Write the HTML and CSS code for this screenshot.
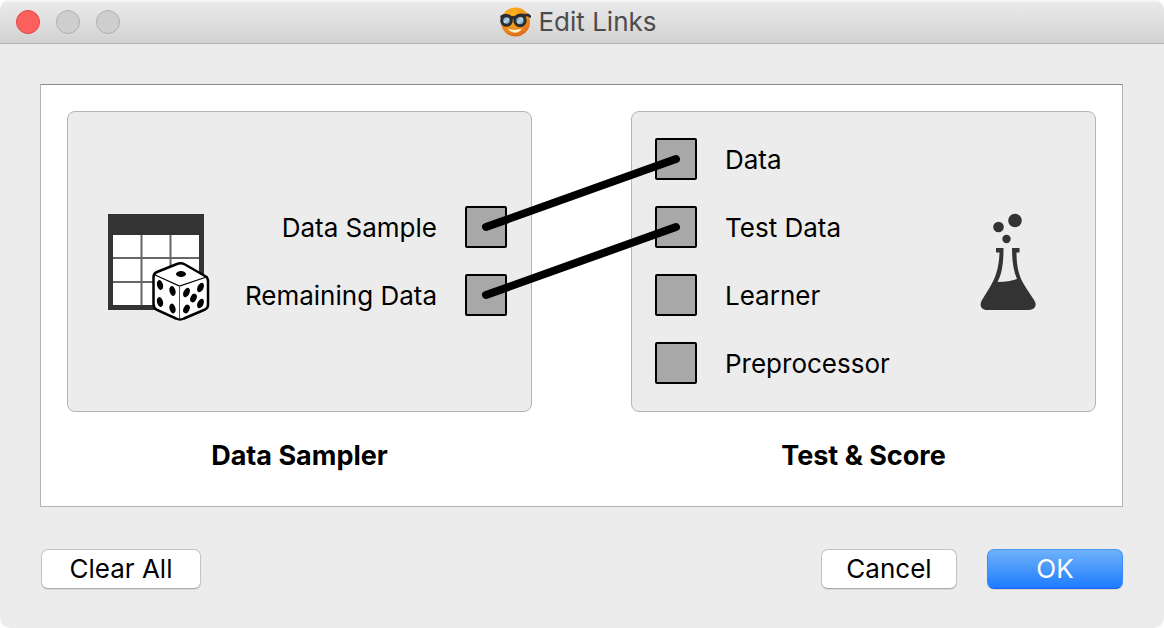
FILE: index.html
```html
<!DOCTYPE html>
<html lang="en">
<head>
<meta charset="utf-8">
<title>Edit Links</title>
<link rel="stylesheet" href="styles.css">
</head>
<body>
<main class="window">
  <header class="titlebar">
    <div class="lights">
      <button class="light light-close" type="button" aria-label="Close"></button>
      <button class="light" type="button" aria-label="Minimize" disabled></button>
      <button class="light" type="button" aria-label="Zoom" disabled></button>
    </div>
    <h1 class="title">
      <svg class="logo" width="32" height="32" viewBox="0 0 32 32" aria-hidden="true">
        <defs>
          <radialGradient id="face" cx="40%" cy="25%" r="80%">
            <stop offset="0" stop-color="#ffb51f"/>
            <stop offset="0.6" stop-color="#f59219"/>
            <stop offset="1" stop-color="#d9641c"/>
          </radialGradient>
          <linearGradient id="lens" x1="0" y1="0" x2="1" y2="1">
            <stop offset="0" stop-color="#3c6b85"/>
            <stop offset="0.5" stop-color="#b4d8e6"/>
            <stop offset="1" stop-color="#3f6f8a"/>
          </linearGradient>
        </defs>
        <circle cx="16.500" cy="16" r="14.500" fill="url(#face)"/>
        <path d="M8 22Q15 25 24 22Q20 27.500 15.500 27Q10.500 26.500 8 22Z" fill="#fff6c4" stroke="#d9701a" stroke-width="0.500"/>
        <g fill="url(#lens)" stroke="#2b2d30" stroke-width="3">
          <circle cx="7.500" cy="14.500" r="4.800"/>
          <circle cx="21" cy="14.500" r="5.200"/>
        </g>
        <path d="M2.500 10.500Q7.500 7.500 13 12Q14.500 10.500 16 12Q20.500 7.500 26 9.500Q29 8 31 10.500" fill="none" stroke="#2b2d30" stroke-width="2.600" stroke-linecap="round"/>
      </svg>
      Edit Links
    </h1>
  </header>

  <section class="content">
    <div class="canvas">
      <div class="node node-source">
        <svg class="icon" width="104" height="108" viewBox="0 0 104 108" aria-hidden="true">
          <rect width="96" height="96" fill="#333"/>
          <rect x="5" y="21" width="86" height="70" fill="#fff"/>
          <path d="M33.500 21V91M62.500 21V91M5 44H91M5 68H91" stroke="#666" stroke-width="2"/>
          <path d="M49 58Q45.500 59.500 45.500 63V90Q45.500 94 49 96L68 104.500Q72 106.500 76 104.500L97 95.500Q100 94 100 91V67Q100 63.500 97 62L77 50.500Q73 48.500 69 50Z" fill="#fff" stroke="#000" stroke-width="2.500"/>
          <path d="M46 60.500L71.500 72L100 62.500" fill="none" stroke="#000" stroke-width="1.200"/>
          <path d="M71.500 72V105" stroke="#555" stroke-width="1"/>
          <ellipse cx="73" cy="60" rx="5" ry="3"/>
          <g>
            <ellipse cx="52" cy="71" rx="3" ry="5" transform="rotate(-15 52 71)"/>
            <ellipse cx="64.500" cy="77" rx="3" ry="5" transform="rotate(-15 64.500 77)"/>
            <ellipse cx="52" cy="88" rx="3" ry="5" transform="rotate(-15 52 88)"/>
            <ellipse cx="64.500" cy="94.500" rx="3" ry="5" transform="rotate(-15 64.500 94.500)"/>
            <ellipse cx="78.500" cy="78.500" rx="3" ry="5" transform="rotate(25 78.500 78.500)"/>
            <ellipse cx="92.500" cy="73.500" rx="3" ry="5" transform="rotate(25 92.500 73.500)"/>
            <ellipse cx="85.500" cy="84" rx="3" ry="4.500" transform="rotate(25 85.500 84)"/>
            <ellipse cx="78.500" cy="95" rx="3" ry="4.500" transform="rotate(25 78.500 95)"/>
            <ellipse cx="92.500" cy="89.500" rx="3" ry="5" transform="rotate(25 92.500 89.500)"/>
          </g>
        </svg>
        <ul class="channels">
          <li class="channel">Data Sample<span class="anchor"></span></li>
          <li class="channel">Remaining Data<span class="anchor"></span></li>
        </ul>
      </div>
      <div class="node node-sink">
        <ul class="channels">
          <li class="channel"><span class="anchor"></span>Data</li>
          <li class="channel"><span class="anchor"></span>Test Data</li>
          <li class="channel"><span class="anchor"></span>Learner</li>
          <li class="channel"><span class="anchor"></span>Preprocessor</li>
        </ul>
        <svg class="icon" width="56" height="98" viewBox="0 0 56 98" fill="#333" aria-hidden="true">
          <circle cx="35" cy="7.500" r="6.800"/>
          <circle cx="18.500" cy="14" r="5.300"/>
          <circle cx="26.500" cy="26" r="4.200"/>
          <path d="M16 35H23.500C23.500 50 22 61 17.500 69Q29 69 37 66C33 57 32 46 32 35H39.500V39.500H36.500C36.500 54 39 64 45.500 74L54 87C58 93 54 97 49 97H7C1 97 -1 92 2 87L10 74C16 64 19 54 19.500 39.500H16Z"/>
        </svg>
      </div>
      <svg class="links" width="99" height="301" viewBox="0 0 99 301" aria-hidden="true">
        <path d="M-46 116L144 48M-46 184L144 116" stroke="#000" stroke-width="8" stroke-linecap="round"/>
      </svg>
      <h2 class="node-name name-source">Data Sampler</h2>
      <h2 class="node-name name-sink">Test &amp; Score</h2>
    </div>

    <footer class="actions">
      <button class="button button-wide" type="button">Clear All</button>
      <button class="button" type="button">Cancel</button>
      <button class="button button-primary" type="button">OK</button>
    </footer>
  </section>
</main>
</body>
</html>
```
FILE: styles.css
```css
* {
  box-sizing: border-box;
}

body {
  margin: 0;
  background: #fff;
  color: #000;
  font: 26px/32px Inter, "Liberation Sans", sans-serif;
}

.window {
  display: flex;
  flex-direction: column;
  min-height: 100vh;
  border-radius: 10px;
  background: #ececec;
  overflow: hidden;
}

.titlebar {
  display: grid;
  grid-template-columns: 1fr auto 1fr;
  align-items: center;
  padding: 6px 24px 5px 16px;
  border-bottom: 1px solid #b1b1b1;
  background: linear-gradient(#ebebeb, #d2d2d2);
  box-shadow: inset 0 2px 0 #f5f5f5;
}

.lights {
  display: flex;
  gap: 16px;
}

.light {
  width: 24px;
  height: 24px;
  padding: 0;
  border: 1px solid #b0b0b0;
  border-radius: 50%;
  background: #cecece;
}

.light-close {
  border-color: #e2444a;
  background: #fc605c;
}

.title {
  display: flex;
  align-items: center;
  gap: 7px;
  margin: 0;
  color: #4c4c4c;
  font-size: 26px;
  font-weight: 400;
}

.content {
  display: flex;
  flex-direction: column;
  gap: 42px;
  padding: 40px 41px 38px 40px;
}

.canvas {
  display: grid;
  grid-template-columns: 1fr 99px 1fr;
  row-gap: 28px;
  padding: 26px 26px 34px;
  border: 1px solid #b3b3b3;
  border-top-color: #8c8c8c;
  background: #fff;
}

.node {
  display: flex;
  align-items: center;
  justify-content: space-between;
  grid-row: 1;
  min-height: 301px;
  border: 1px solid #b5b5b5;
  border-radius: 8px;
  background: #ececec;
}

.node-source {
  grid-column: 1;
  padding: 26px 24px 27px 40px;
}

.node-sink {
  grid-column: 3;
  padding: 26px 59px 27px 23px;
}

.icon {
  flex: none;
  margin-top: 2px;
}

.node-source .icon {
  margin-top: 14px;
}

.channels {
  display: flex;
  flex-direction: column;
  gap: 26px;
  margin: 0;
  padding: 0;
  list-style: none;
}

.channel {
  display: flex;
  align-items: flex-end;
  gap: 28px;
  line-height: 40px;
  white-space: nowrap;
}

.node-source .channel {
  justify-content: flex-end;
}

.anchor {
  width: 42px;
  height: 42px;
  border: 2px solid #000;
  border-radius: 2px;
  background: #a8a8a8;
}

.links {
  z-index: 1;
  grid-row: 1;
  grid-column: 2;
  overflow: visible;
}

.node-name {
  grid-row: 2;
  margin: 0;
  font-size: 27px;
  font-weight: 700;
  text-align: center;
}

.name-source {
  grid-column: 1;
}

.name-sink {
  grid-column: 3;
}

.actions {
  display: flex;
  gap: 30px;
  padding-left: 1px;
}

.button {
  width: 136px;
  height: 40px;
  padding: 0;
  border: 1px solid #c4c4c4;
  border-bottom-color: #acacac;
  border-radius: 7px;
  background: #fff;
  color: #000;
  font: inherit;
  box-shadow: 0 1px 1px #00000018;
}

.button-wide {
  width: 160px;
  margin-right: auto;
}

.button-primary {
  border-color: #4a9af0 #3a8bf8 #1f5ef5;
  background: linear-gradient(#6eb3f9, #1f7bff);
  color: #fff;
}
```
